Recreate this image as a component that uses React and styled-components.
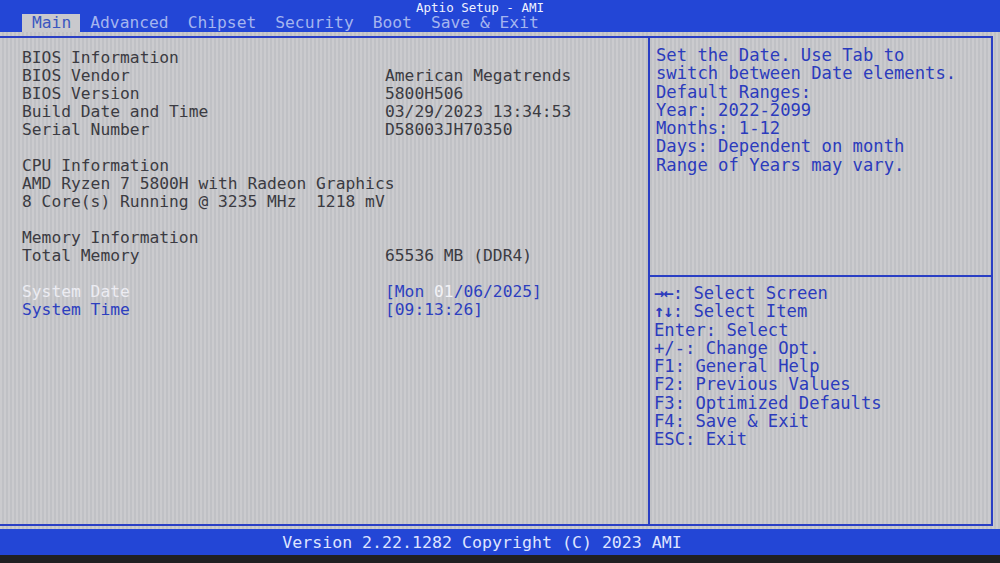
import React from 'react';
import styled, { createGlobalStyle } from 'styled-components';

const GlobalStyle = createGlobalStyle`
  html, body { margin: 0; padding: 0; background: #1b1b1d; }
  body { font-family: "DejaVu Sans Mono", "Liberation Mono", monospace; }
`;

const blue = '#2346d6';
const frameBlue = '#2a3fc4';

const Screen = styled.div`
  width: 1000px;
  height: 563px;
  display: flex;
  flex-direction: column;
  overflow: hidden;
  background: repeating-linear-gradient(90deg, #cbcbce 0 2px, #c0c1c5 2px 4px);
`;

const TopBar = styled.div`
  height: 32px;
  background: ${blue};
  display: flex;
  flex-direction: column;
`;

const Title = styled.div`
  padding-top: 1px;
  line-height: 13px;
  text-align: center;
  color: #f0f2ff;
  font-size: 12.5px;
  padding-right: 40px;
`;

const Tabs = styled.div`
  flex: 1;
  display: flex;
  align-items: flex-end;
  padding-left: 22px;
`;

const Tab = styled.div`
  font-size: 16.3px;
  line-height: 18px;
  height: 18px;
  padding: 0 9px 0 10px;
  color: ${p => (p.$active ? '#3a57c0' : '#a5b5ef')};
  background: ${p => (p.$active ? '#c9c9cd' : 'transparent')};
`;

const Body = styled.div`
  flex: 1;
  padding: 4px 7px 3px 0;
  display: flex;
`;

const Frame = styled.div`
  flex: 1;
  display: grid;
  grid-template-columns: 650px 1fr;
  border: 2px solid ${frameBlue};
  border-left: none;
`;

const MainPanel = styled.div`
  border-right: 2px solid ${frameBlue};
  padding: 11px 0 0 22px;
  display: grid;
  grid-template-columns: 363px 1fr;
  grid-auto-rows: 18px;
  align-content: start;
  font-size: 16.3px;
  line-height: 18px;
  color: #3b3b42;
  white-space: pre;
`;

const Label = styled.div`
  grid-column: ${p => (p.$wide ? '1 / -1' : 'auto')};
  color: ${p => (p.$selected ? '#ececf2' : p.$blue ? '#2d3fbf' : 'inherit')};
`;

const Value = styled.div`
  color: ${p => (p.$blue ? '#2d3fbf' : 'inherit')};
`;

const Hi = styled.span`
  color: #f2f2f6;
`;

const Gap = styled.div`
  grid-column: 1 / -1;
`;

const Side = styled.div`
  display: flex;
  flex-direction: column;
  color: #2b3bbd;
  font-size: 17.2px;
  line-height: 18.3px;
  white-space: pre;
`;

const Help = styled.div`
  height: 229px;
  padding: 8px 0 0 6px;
`;

const Keys = styled.div`
  border-top: 2px solid ${frameBlue};
  padding: 7px 0 0 4px;
`;

const Line = styled.div``;

const Arrows = styled.span`
  font-weight: bold;
  letter-spacing: -1px;
`;

const Footer = styled.div`
  height: 26px;
  background: ${blue};
  color: #dfe4ff;
  font-size: 16.6px;
  display: flex;
  align-items: center;
  justify-content: center;
  padding-right: 36px;
`;

const Bezel = styled.div`
  height: 8px;
  background: #202022;
`;

const tabs = ['Main', 'Advanced', 'Chipset', 'Security', 'Boot', 'Save & Exit'];

const rows = [
  { label: 'BIOS Information' },
  { label: 'BIOS Vendor', value: 'American Megatrends' },
  { label: 'BIOS Version', value: '5800H506' },
  { label: 'Build Date and Time', value: '03/29/2023 13:34:53' },
  { label: 'Serial Number', value: 'D58003JH70350' },
  { gap: true },
  { label: 'CPU Information', wide: true },
  { label: 'AMD Ryzen 7 5800H with Radeon Graphics', wide: true },
  { label: '8 Core(s) Running @ 3235 MHz  1218 mV', wide: true },
  { gap: true },
  { label: 'Memory Information' },
  { label: 'Total Memory', value: '65536 MB (DDR4)' },
  { gap: true },
];

const help = [
  'Set the Date. Use Tab to',
  'switch between Date elements.',
  'Default Ranges:',
  'Year: 2022-2099',
  'Months: 1-12',
  'Days: Dependent on month',
  'Range of Years may vary.',
];

const keys = [
  { arrows: '\u2192\u2190', text: ': Select Screen' },
  { arrows: '\u2191\u2193', text: ': Select Item' },
  { text: 'Enter: Select' },
  { text: '+/-: Change Opt.' },
  { text: 'F1: General Help' },
  { text: 'F2: Previous Values' },
  { text: 'F3: Optimized Defaults' },
  { text: 'F4: Save & Exit' },
  { text: 'ESC: Exit' },
];

export default function App() {
  return (
    <>
      <GlobalStyle />
      <Screen>
        <TopBar>
          <Title>Aptio Setup - AMI</Title>
          <Tabs>
            {tabs.map((t, i) => (
              <Tab key={t} $active={i === 0}>{t}</Tab>
            ))}
          </Tabs>
        </TopBar>
        <Body>
          <Frame>
            <MainPanel>
              {rows.map((r, i) =>
                r.gap ? (
                  <Gap key={i} />
                ) : (
                  <React.Fragment key={i}>
                    <Label $wide={r.wide}>{r.label}</Label>
                    {!r.wide && <Value>{r.value || ''}</Value>}
                  </React.Fragment>
                )
              )}
              <Label $selected>System Date</Label>
              <Value $blue>[Mon <Hi>01</Hi>/06/2025]</Value>
              <Label $blue>System Time</Label>
              <Value $blue>[09:13:26]</Value>
            </MainPanel>
            <Side>
              <Help>
                {help.map(h => <Line key={h}>{h}</Line>)}
              </Help>
              <Keys>
                {keys.map(k => (
                  <Line key={k.text}>
                    {k.arrows && <Arrows>{k.arrows}</Arrows>}
                    {k.text}
                  </Line>
                ))}
              </Keys>
            </Side>
          </Frame>
        </Body>
        <Footer>Version 2.22.1282 Copyright (C) 2023 AMI</Footer>
        <Bezel />
      </Screen>
    </>
  );
}
